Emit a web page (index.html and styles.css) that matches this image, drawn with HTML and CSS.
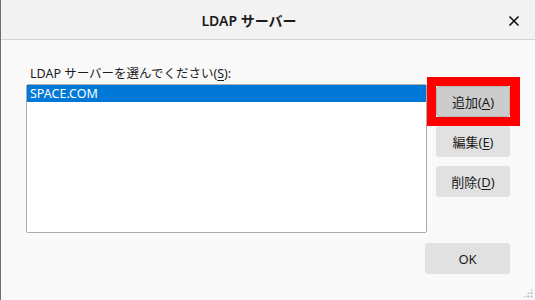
FILE: index.html
```html
<!DOCTYPE html>
<html>
  <head>
    <meta charset="UTF-8" />
    <title>LDAP サーバー</title>
    <link rel="stylesheet" href="styles.css">
  </head>
  <body>
    <div class="dialog">
      <div class="titlebar">
        <span class="title">LDAP サーバー</span>
        <button class="close" aria-label="閉じる">
          <svg width="12" height="12" viewBox="0 0 12 12">
            <path d="M1.5 1.5 L10.5 10.5 M10.5 1.5 L1.5 10.5" stroke="#111" stroke-width="1.6" />
          </svg>
        </button>
      </div>

      <div class="content">
        <label class="list-label" for="servers">LDAP サーバーを選んでください(<u>S</u>):</label>
        <div class="main-row">
          <div id="servers" class="listbox" tabindex="0">
            <div class="list-item selected">SPACE.COM</div>
          </div>
          <div class="side-buttons">
            <div class="highlight-frame">
              <button class="btn btn-pressed">追加(<u>A</u>)</button>
            </div>
            <button class="btn">編集(<u>E</u>)</button>
            <button class="btn">削除(<u>D</u>)</button>
          </div>
        </div>
        <div class="footer">
          <button class="btn btn-ok">OK</button>
        </div>
      </div>
      <div class="grip"></div>
    </div>
  </body>
</html>
```

FILE: styles.css
```css
:root {
  --bg-color: #f9f9f9;
  --title-bg: #f2f2f2;
  --border-color: #acacac;
  --button-bg: #e1e1e1;
  --select-color: #0078d7;
  --highlight: #ff0000;
}

body {
  margin: 0;
  width: 535px;
  height: 300px;
  overflow: hidden;
  background-color: var(--bg-color);
  font-family: "Noto Sans", "Noto Sans CJK JP", sans-serif;
  color: #1a1a1a;
}

.dialog {
  position: relative;
  height: 300px;
  border-left: 1px solid #6e6e6e;
  box-sizing: border-box;
}

.titlebar {
  position: relative;
  display: flex;
  justify-content: center;
  align-items: center;
  height: 40px;
  background-color: var(--title-bg);
  border-bottom: 1px solid #d5d5d5;
  box-sizing: border-box;
}

.title {
  font-size: 14px;
  font-weight: 600;
  color: #1c1c1c;
  margin-left: -38px;
}

.close {
  position: absolute;
  right: 11px;
  top: 13px;
  width: 20px;
  height: 16px;
  padding: 0;
  border: none;
  background: none;
  display: flex;
  align-items: center;
  justify-content: center;
}

.content {
  padding: 25px 25px 0 25px;
}

.list-label {
  display: block;
  font-size: 12.5px;
  line-height: 18px;
  padding-left: 4px;
  margin-bottom: 1px;
}

u {
  text-decoration-thickness: 1px;
  text-underline-offset: 2px;
}

.main-row {
  display: flex;
  align-items: flex-start;
}

.listbox {
  width: 401px;
  height: 149px;
  box-sizing: border-box;
  background-color: #ffffff;
  border: 1px solid var(--border-color);
  border-radius: 2px;
  outline: none;
}

.list-item {
  height: 17px;
  line-height: 17px;
  padding-left: 3px;
  font-size: 12.5px;
}

.list-item.selected {
  background-color: var(--select-color);
  color: #ffffff;
}

.side-buttons {
  display: flex;
  flex-direction: column;
  gap: 9px;
  margin-left: 9px;
  padding-top: 2px;
}

.btn {
  width: 74px;
  height: 31px;
  padding: 0;
  border: none;
  border-radius: 3px;
  background-color: var(--button-bg);
  color: #1a1a1a;
  font-family: "Noto Sans", "Noto Sans CJK JP", sans-serif;
  font-size: 13px;
}

/* red annotation frame around the add button */
.highlight-frame {
  display: flex;
  margin: -9px -10px -9px -9px;
  border: 9px solid var(--highlight);
  border-right-width: 10px;
}

.btn-pressed {
  background-color: #cccccc;
  border: 1px solid #b5b5b5;
}

.footer {
  display: flex;
  justify-content: flex-end;
  margin-top: 10px;
}

.btn-ok {
  width: 85px;
}

.grip {
  position: absolute;
  right: 2px;
  bottom: 2px;
  width: 10px;
  height: 10px;
  background-image: radial-gradient(#b0b0b0 1.2px, transparent 1.3px);
  background-size: 3.4px 3.4px;
  clip-path: polygon(100% 0, 100% 100%, 0 100%);
}
```
